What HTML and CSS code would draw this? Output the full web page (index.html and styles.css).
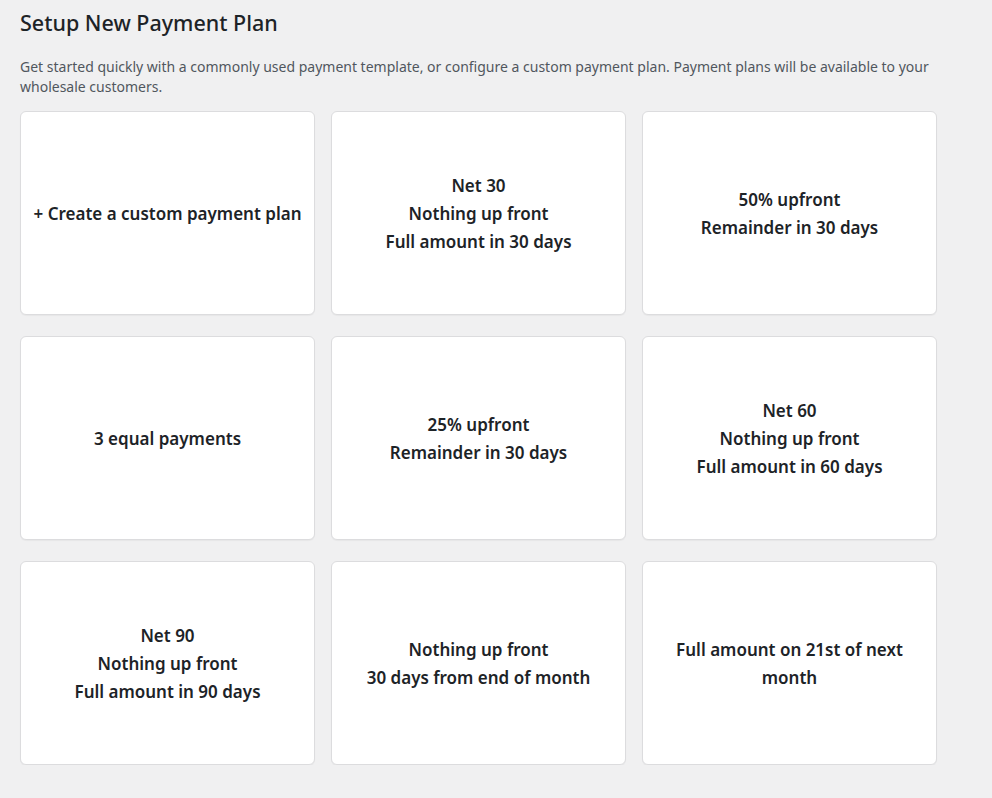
FILE: index.html
```html
<!DOCTYPE html>
<html lang="en">

<head>
    <meta charset="UTF-8">
    <meta name="viewport" content="width=device-width, initial-scale=1.0">
    <title>Setup New Payment Plan</title>
    <link rel="stylesheet" href="styles.css">
</head>

<body>
    <main class="wrap">
        <h1 class="page-title">Setup New Payment Plan</h1>
        <p class="intro">
            Get started quickly with a commonly used payment template, or configure a custom payment plan. Payment plans will be available to your wholesale customers.
        </p>
        <div class="plan-grid">
            <button class="plan-card">+ Create a custom payment plan</button>
            <button class="plan-card">Net 30<br>Nothing up front<br>Full amount in 30 days</button>
            <button class="plan-card">50% upfront<br>Remainder in 30 days</button>
            <button class="plan-card">3 equal payments</button>
            <button class="plan-card">25% upfront<br>Remainder in 30 days</button>
            <button class="plan-card">Net 60<br>Nothing up front<br>Full amount in 60 days</button>
            <button class="plan-card">Net 90<br>Nothing up front<br>Full amount in 90 days</button>
            <button class="plan-card">Nothing up front<br>30 days from end of month</button>
            <button class="plan-card">Full amount on 21st of next month</button>
        </div>
    </main>
</body>

</html>
```

FILE: styles.css
```css
body {
    margin: 0px;
    padding: 0px;
    background-color: #f0f0f1;
    color: #1d2327;
    font-family: "Noto Sans", sans-serif;
}

.wrap {
    width: 918px;
    padding: 0px 20px;
}

.page-title {
    margin: 0px;
    padding-top: 9px;
    font-size: 21.5px;
    font-weight: 500;
    line-height: 28px;
    color: #1d2327;
}

.intro {
    margin: 20px 0px 14px 0px;
    font-size: 14px;
    line-height: 20px;
    color: #50575e;
}

.plan-grid {
    display: grid;
    grid-template-columns: repeat(3, 295px);
    column-gap: 16px;
    row-gap: 21px;
}

.plan-card {
    height: 204px;
    padding: 1px 10px 0px 10px;
    background-color: #fff;
    border: 1px solid #dcdcde;
    border-radius: 6px;
    box-shadow: 0px 1px 1px rgba(0, 0, 0, 0.04);
    font-family: inherit;
    font-size: 17px;
    font-weight: 600;
    line-height: 28px;
    color: #1d2327;
    text-align: center;
    cursor: pointer;
}
```
